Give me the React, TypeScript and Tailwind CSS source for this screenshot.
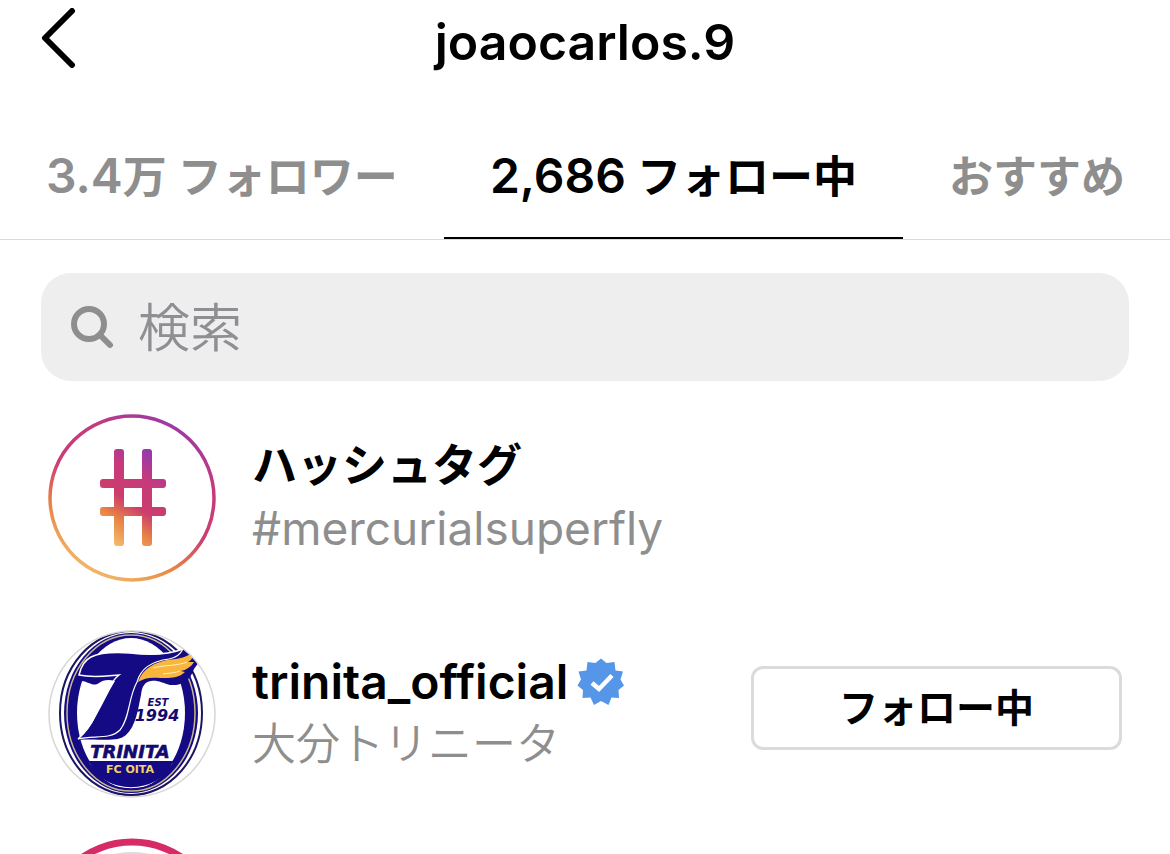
import type { ReactNode } from 'react'

const tabs = [
  { id: 'followers', count: '3.4', label: '万 フォロワー', active: false },
  { id: 'following', count: '2,686', label: ' フォロー中', active: true },
  { id: 'suggested', count: '', label: 'おすすめ', active: false },
]

export default function App() {
  return (
    <div className="flex h-screen flex-col overflow-hidden bg-white font-['Inter','Noto_Sans_CJK_JP',sans-serif] text-black">
      <header className="grid h-[112px] shrink-0 grid-cols-[1fr_auto_1fr] items-start px-10">
        <button type="button" aria-label="戻る" className="mt-2 w-9">
          <BackIcon />
        </button>
        <h1 className="mt-2 text-[50px] leading-[68px] font-semibold">joaocarlos.9</h1>
      </header>

      <nav className="flex h-32 shrink-0 border-b border-[#dbdbdb]">
        {tabs.map((tab) => (
          <button
            key={tab.id}
            type="button"
            className={
              tab.active
                ? 'shrink-0 border-b-2 border-black px-[46px] pt-1 text-[44px] leading-[68px] font-semibold whitespace-pre'
                : 'shrink-0 border-b-2 border-transparent px-[46px] pt-1 text-[44px] leading-[68px] font-semibold whitespace-pre text-[#8e8e8e]'
            }
          >
            {tab.count && <span className="text-[48px]">{tab.count}</span>}
            {tab.label}
          </button>
        ))}
      </nav>

      <main className="flex min-h-0 flex-1 flex-col">
        <label className="mx-[41px] mt-[33px] flex h-[108px] shrink-0 items-center gap-6 rounded-[30px] bg-[#eeeeee] px-[30px]">
          <SearchIcon />
          <input
            type="search"
            aria-label="検索"
            placeholder="検索"
            className="min-w-0 flex-1 bg-transparent pt-1 text-[52px] leading-[76px] font-[350] outline-none placeholder:text-[#8e8e93]"
          />
        </label>

        <ul className="mt-[33px] flex flex-col gap-12 px-12">
          <Row
            avatar={<HashtagAvatar />}
            title="ハッシュタグ"
            titleClass="text-[45px]"
            subtitle="#mercurialsuperfly"
            subtitleClass="text-[46px]"
          />
          <Row
            avatar={<TrinitaAvatar />}
            title="trinita_official"
            titleClass="text-[48px]"
            subtitle="大分トリニータ"
            subtitleClass="text-[44px] font-[350]"
            verified
            following
          />
          <li className="flex h-[168px] shrink-0 items-center">
            <StoryAvatar />
          </li>
        </ul>
      </main>
    </div>
  )
}

interface RowProps {
  avatar: ReactNode
  title: string
  titleClass: string
  subtitle: string
  subtitleClass: string
  verified?: boolean
  following?: boolean
}

function Row({ avatar, title, titleClass, subtitle, subtitleClass, verified, following }: RowProps) {
  return (
    <li className="flex h-[168px] shrink-0 items-center gap-9">
      {avatar}
      <div className="min-w-0 flex-1">
        <div className="flex h-[60px] items-center gap-2">
          <a href="#" className={`block leading-[60px] font-semibold ${titleClass}`}>
            {title}
          </a>
          {verified && <VerifiedBadge />}
        </div>
        <p className={`leading-[64px] text-[#8e8e8e] ${subtitleClass}`}>{subtitle}</p>
      </div>
      {following && (
        <button
          type="button"
          className="mb-3 h-[84px] w-[371px] shrink-0 rounded-xl border-[3px] border-[#dbdbdb] text-[39px] leading-[60px] font-semibold"
        >
          フォロー中
        </button>
      )}
    </li>
  )
}

function BackIcon() {
  return (
    <svg viewBox="0 0 36 60" className="h-[60px] w-9" fill="none" stroke="currentColor" strokeWidth="6" strokeLinecap="round" strokeLinejoin="round">
      <path d="M32 3 L5 30 L32 57" />
    </svg>
  )
}

function SearchIcon() {
  return (
    <svg viewBox="0 0 43 43" className="size-[43px] shrink-0" fill="none" stroke="#8e8e8e" strokeWidth="6" strokeLinecap="round">
      <circle cx="18" cy="18" r="15" />
      <path d="M29 29 L39 39" />
    </svg>
  )
}

function VerifiedBadge() {
  return (
    <svg viewBox="0 0 48 48" className="size-12 shrink-0" role="img" aria-label="認証済み">
      <path
        d="M25 0.5 L30.500 5 L38.500 4 L39.500 12.500 L47 13.500 L44.500 21.500 L48 27.500 L42.500 32 L43 40 L35.500 39.500 L32.500 47 L25 43 L18 47 L14.500 39.500 L6.500 40 L7 32 L1.500 27.500 L5 21.500 L2.500 13.500 L10.500 12.500 L11.500 4 L19.500 5 Z"
        fill="#5596e9"
      />
      <path d="M16 25 L23 31 L36 17.500" fill="none" stroke="#fff" strokeWidth="4.5" />
    </svg>
  )
}

function HashtagAvatar() {
  return (
    <svg viewBox="0 0 168 168" className="size-[168px] shrink-0" aria-hidden="true">
      <defs>
        <linearGradient id="ring" gradientUnits="userSpaceOnUse" x1="44" y1="160" x2="124" y2="8">
          <stop offset="0" stopColor="#f2b868" />
          <stop offset="0.25" stopColor="#e88345" />
          <stop offset="0.48" stopColor="#cc3d72" />
          <stop offset="0.78" stopColor="#c63a7d" />
          <stop offset="1" stopColor="#9c39a5" />
        </linearGradient>
        <linearGradient id="hash" gradientUnits="userSpaceOnUse" x1="58" y1="126" x2="110" y2="44">
          <stop offset="0" stopColor="#f3bd70" />
          <stop offset="0.25" stopColor="#e88345" />
          <stop offset="0.46" stopColor="#cb3d6c" />
          <stop offset="0.75" stopColor="#c63a7d" />
          <stop offset="1" stopColor="#9839ac" />
        </linearGradient>
      </defs>
      <circle cx="84" cy="84" r="82" fill="none" stroke="url(#ring)" strokeWidth="3.5" />
      <path
        d="M69 35h4a3 3 0 0 1 3 3v91a3 3 0 0 1-3 3h-4a3 3 0 0 1-3-3V38a3 3 0 0 1 3-3zM97 35h4a3 3 0 0 1 3 3v91a3 3 0 0 1-3 3h-4a3 3 0 0 1-3-3V38a3 3 0 0 1 3-3zM55 65h60a3 3 0 0 1 3 3v3a3 3 0 0 1-3 3H55a3 3 0 0 1-3-3v-3a3 3 0 0 1 3-3zM55 93h60a3 3 0 0 1 3 3v3a3 3 0 0 1-3 3H55a3 3 0 0 1-3-3v-3a3 3 0 0 1 3-3z"
        fill="url(#hash)"
      />
    </svg>
  )
}

function TrinitaAvatar() {
  return (
    <svg viewBox="0 0 168 168" className="size-[168px] shrink-0" role="img" aria-label="TRINITA FC OITA">
      <defs>
        <clipPath id="avatar">
          <circle cx="84" cy="84" r="83" />
        </clipPath>
        <clipPath id="shield">
          <ellipse cx="83" cy="83" rx="55" ry="76" />
        </clipPath>
      </defs>
      <g clipPath="url(#avatar)">
        <ellipse cx="83" cy="83" rx="71" ry="82" fill="#fff" stroke="#1b1660" strokeWidth="2" />
        <ellipse cx="83" cy="83" rx="67" ry="80" fill="#140a84" />
        <ellipse cx="83" cy="83" rx="64" ry="78" fill="none" stroke="#c9b58b" strokeWidth="1.5" />
        <ellipse cx="83" cy="83" rx="54" ry="75" fill="#fff" />
        <g clipPath="url(#shield)">
          <path d="M26 131 H140 V162 H26 Z" fill="#140a84" />
          <path d="M41 133 C55 166 111 166 125 133" fill="none" stroke="#fff" strokeWidth="1.2" />
        </g>
        {/* winged T */}
        <path
          d="M31 45 C33 36 37 30 43 27 C53 22 66 22 82 23 C98 25 117 26 135 19 L152 23 C152 32 149 35 146 39 C142 51 133 56 122 55 C114 53 110 50 103 51 C96 52 94 57 93 65 C90 79 88 96 78 105 C69 113 50 108 30 110 C38 102 44 94 48 86 C55 74 60 62 67 51 C60 49 55 50 51 53 C45 57 41 52 34 51 Z"
          fill="#140a84"
        />
        <path d="M30 109 C38 102 43 95 47 86 C55 70 61 53 71 45 C58 46 45 48 31 45 C33 36 37 30 43 27 C53 22 66 22 82 23 C98 25 117 26 135 19" fill="none" stroke="#fff" strokeWidth="1.5" />
        <path d="M30 109 C45 105 62 110 72 100 C82 88 80 68 89 52 C93 37 105 31 121 29 C128 28 132 25 135 19" fill="none" stroke="#fff" strokeWidth="1.2" />
        <path
          d="M90 52 C95 38 106 33 119 30 C129 29 137 28 144 23 C146 26 144 30 140 32 L146 32 C143 37 138 40 133 41 L137 42 C130 49 120 48 112 48 C103 47 96 48 90 52 Z"
          fill="#f8b63c"
        />
        <path d="M105 38 C115 35 130 36 139 32 M115 44 C122 43 127 43 132 41" fill="none" stroke="#fff2c6" strokeWidth="1" />
        <g className="font-['DejaVu_Sans',sans-serif] font-bold" fill="#140a6e" textAnchor="middle">
          <g className="italic">
            <text x="110" y="76" fontSize="10">EST</text>
            <text x="109" y="91" fontSize="16">1994</text>
            <text x="82" y="128" fontSize="18" stroke="#140a6e" strokeWidth="0.6">TRINITA</text>
          </g>
          <text x="82" y="143" fontSize="11" fill="#f2d36d">FC OITA</text>
        </g>
      </g>
      <circle cx="84" cy="84" r="83" fill="none" stroke="#d6d6d6" strokeWidth="1.5" />
    </svg>
  )
}

function StoryAvatar() {
  return (
    <svg viewBox="0 0 168 168" className="size-[168px] shrink-0 overflow-visible" aria-hidden="true">
      <circle cx="84" cy="84" r="88" fill="none" stroke="#d62b66" strokeWidth="7" />
      <circle cx="84" cy="84" r="78" fill="#d8dfe2" />
    </svg>
  )
}
